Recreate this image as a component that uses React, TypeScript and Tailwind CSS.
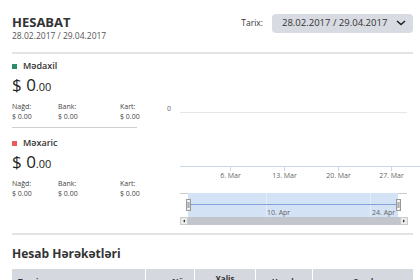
function MoneyBlock({ color, title }: { color: string; title: string }) {
  return (
    <div>
      <div className="flex items-center gap-[6px] leading-3">
        <span className="w-[5px] h-[5px]" style={{ backgroundColor: color }} />
        <span className="text-[9px] font-semibold text-[#333]">{title}</span>
      </div>
      <div className="mt-[3px] text-[17px] leading-5 text-[#222]">
        $ 0<span className="text-[11px]">.00</span>
      </div>
      <div className="mt-[5px] grid grid-cols-[46px_62px_40px] whitespace-nowrap text-[7px] leading-[10px] text-[#444]">
        <span>Nağd:</span>
        <span>Bank:</span>
        <span>Kart:</span>
        <span>$ 0.00</span>
        <span>$ 0.00</span>
        <span>$ 0.00</span>
      </div>
    </div>
  );
}

function Chart() {
  const ticks = [
    { x: 70.5, label: "6. Mar" },
    { x: 124.5, label: "13. Mar" },
    { x: 178.5, label: "20. Mar" },
    { x: 231.5, label: "27. Mar" },
  ];
  return (
    <svg width="260" height="172" className="block" style={{ fontFamily: "'Open Sans', sans-serif" }}>
      <text x="7" y="57" fontSize="7" fill="#666">0</text>
      <line x1="20" y1="58.5" x2="247" y2="58.5" stroke="#e6e6e6" />
      <line x1="20" y1="112.5" x2="260" y2="112.5" stroke="#ccd6eb" />
      {ticks.map((t) => (
        <g key={t.label}>
          <line x1={t.x} y1="112" x2={t.x} y2="117" stroke="#ccd6eb" />
          <text x={t.x} y="124" fontSize="7" fill="#666" textAnchor="middle">{t.label}</text>
        </g>
      ))}
      {/* navigator */}
      <line x1="20" y1="139.5" x2="247" y2="139.5" stroke="#cccccc" />
      <rect x="28" y="139" width="210" height="24" fill="#d4e2f5" />
      <line x1="106.5" y1="139" x2="106.5" y2="163" stroke="#e4ecf7" />
      <line x1="210.5" y1="139" x2="210.5" y2="163" stroke="#e4ecf7" />
      <line x1="28" y1="150.5" x2="238" y2="150.5" stroke="#7fa3d8" />
      <text x="107" y="160.5" fontSize="7" fill="#666">10. Apr</text>
      <text x="212" y="160.5" fontSize="7" fill="#666">24. Apr</text>
      <rect x="26.5" y="145.5" width="4" height="11" fill="#f2f2f2" stroke="#999" />
      <line x1="28" y1="148" x2="28" y2="154" stroke="#999" />
      <line x1="29" y1="148" x2="29" y2="154" stroke="#999" />
      <rect x="236.5" y="145.5" width="4" height="11" fill="#f2f2f2" stroke="#999" />
      <line x1="238" y1="148" x2="238" y2="154" stroke="#999" />
      <line x1="239" y1="148" x2="239" y2="154" stroke="#999" />
      {/* scrollbar */}
      <rect x="20" y="163" width="228" height="8" fill="#f2f2f2" />
      <rect x="28" y="163" width="212" height="8" fill="#c2c6cc" />
      <rect x="20.5" y="163.5" width="7" height="7" fill="#ebebeb" stroke="#cccccc" />
      <path d="M25 165.5 L23 167 L25 168.5 Z" fill="#333" />
      <rect x="240.5" y="163.5" width="7" height="7" fill="#ebebeb" stroke="#cccccc" />
      <path d="M243 165.5 L245 167 L243 168.5 Z" fill="#333" />
    </svg>
  );
}

export default function App() {
  return (
    <div className="w-[420px] h-[280px] overflow-hidden bg-white font-['Open_Sans',sans-serif]">
      <div className="flex justify-between pl-3 pr-[7px] pt-[14px]">
        <div>
          <h1 className="text-[13px] font-bold leading-4 text-[#333]">HESABAT</h1>
          <p className="text-[8.5px] leading-[11px] text-[#555]">28.02.2017 / 29.04.2017</p>
        </div>
        <div className="flex items-center gap-[9px] -mt-[1px] h-[20px]">
          <span className="text-[8.5px] text-[#333]">Tarix:</span>
          <div className="flex items-center justify-between w-[141px] h-[19px] pl-[10px] pr-[7px] bg-[#d8dbe1] rounded-sm">
            <span className="text-[9.5px] text-[#333]">28.02.2017 / 29.04.2017</span>
            <svg width="10" height="6" viewBox="0 0 10 6">
              <path d="M1 1 L5 4.5 L9 1" stroke="#222" strokeWidth="1.6" fill="none" />
            </svg>
          </div>
        </div>
      </div>
      <div className="mt-[11px] ml-3 mr-[7px] h-[2px] bg-[#e3e3e3]" />
      <div className="flex pl-3">
        <div className="w-[125px] shrink-0 pt-[6px]">
          <MoneyBlock color="#2e8b6e" title="Mədaxil" />
          <div className="mt-[5px] h-px bg-[#cfcfcf]" />
          <div className="mt-[9px]">
            <MoneyBlock color="#e85c5c" title="Məxaric" />
          </div>
        </div>
        <div className="ml-[23px]">
          <Chart />
        </div>
      </div>
      <div className="mt-[7px] ml-3 mr-[7px] h-[2px] bg-[#e3e3e3]" />
      <h2 className="mt-[11px] pl-3 text-[12px] font-bold leading-4 text-[#333]">Hesab Hərəkətləri</h2>
      <div className="mt-[7px] ml-3 mr-[7px] grid grid-cols-[133px_48px_60px_56px_1fr] gap-x-[1px] text-[8px] font-bold text-[#333] leading-[10px]">
        <div className="bg-[#d5d8de] h-[26px] flex items-center pl-[6px]">Təsvir</div>
        <div className="bg-[#d5d8de] h-[26px] flex items-center justify-end pr-[6px]">Növ</div>
        <div className="bg-[#d5d8de] h-[26px] flex flex-col items-center pt-[5px]">
          <span>Xalis</span>
          <span>məbləğ</span>
        </div>
        <div className="bg-[#d5d8de] h-[26px] flex items-center justify-center">Hesab</div>
        <div className="bg-[#d5d8de] h-[26px] flex items-center justify-center">Qeyd</div>
      </div>
    </div>
  );
}
